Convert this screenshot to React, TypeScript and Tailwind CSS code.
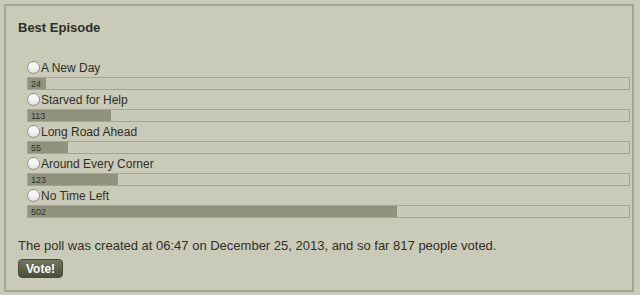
import React from "react";

interface PollOption {
    id: number;
    label: string;
    votes: number;
}

const options: PollOption[] = [
    { id: 1, label: "A New Day", votes: 24 },
    { id: 2, label: "Starved for Help", votes: 113 },
    { id: 3, label: "Long Road Ahead", votes: 55 },
    { id: 4, label: "Around Every Corner", votes: 123 },
    { id: 5, label: "No Time Left", votes: 502 },
];

const total = options.reduce((sum, o) => sum + o.votes, 0);

const App: React.FC = () => {
    return (
        <div className="min-h-[295px] w-[640px] bg-[#c9cab7] p-[4px] text-[#2f2f2a]" style={{ fontFamily: '"Liberation Sans", Arial, sans-serif' }}>
            <div className="w-[630px] h-[288px] border-2 border-[#a4a693] px-[12px] pt-[14px]">
                <h2 className="text-[13px] leading-[16px] font-bold">Best Episode</h2>
                <div className="mt-[22px] ml-[9px] w-[603px]">
                    {options.map((o) => (
                        <div key={o.id}>
                            <label className="flex items-center h-[19px] text-[12px]">
                                <span className="w-[13px] h-[13px] rounded-full border border-[#8d8d86] bg-gradient-to-b from-white to-[#e4e4e0] shadow-[inset_0_1px_1px_rgba(255,255,255,0.9)]" />
                                <span className="ml-[1px]">{o.label}</span>
                            </label>
                            <div className="relative h-[13px] border border-[#a3a592] bg-[#c8c9b6]">
                                <div className="h-full bg-[#91937f]" style={{ width: `${(o.votes / total) * 100}%` }} />
                                <span className="absolute left-[3px] bottom-[0px] text-[9px] leading-[10px] text-[#2f2f2a]">{o.votes}</span>
                            </div>
                        </div>
                    ))}
                </div>
                <p className="mt-[20px] text-[13px] leading-[16px]">
                    The poll was created at 06:47 on December 25, 2013, and so far {total} people voted.
                </p>
                <button className="mt-[5px] w-[45px] h-[19px] rounded-[4px] border border-[#4a4c3a] bg-gradient-to-b from-[#737660] to-[#4b4e3a] text-white text-[12px] font-bold leading-none">
                    Vote!
                </button>
            </div>
        </div>
    );
};

export default App;
